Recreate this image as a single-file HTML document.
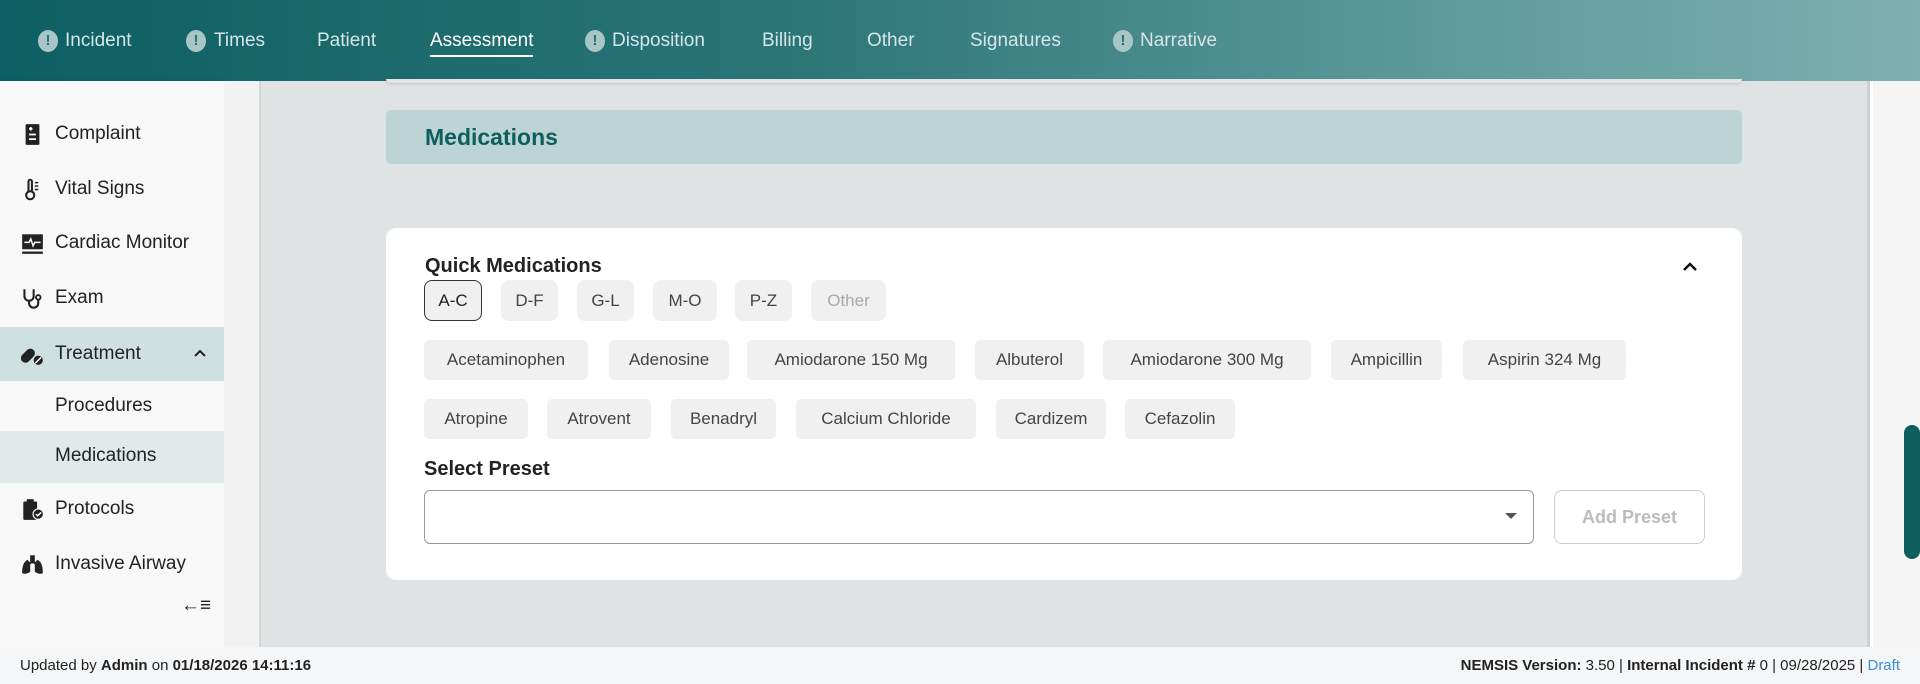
<!DOCTYPE html>
<html><head><meta charset="utf-8"><style>
*{box-sizing:border-box;margin:0;padding:0}
body{width:1920px;height:684px;overflow:hidden;font-family:"Liberation Sans",sans-serif;background:#fff;position:relative}
.hdr{position:absolute;left:0;top:0;width:1920px;height:81px;background:linear-gradient(90deg,#0c5f62 0%,#2a7476 40%,#5e9a9c 75%,#7db0b1 100%)}
.nav{position:absolute;top:30px;font-size:19px;color:#d6e6e6;white-space:nowrap}
.nav.act{color:#fff}
.nav.act:after{content:"";position:absolute;left:0;right:0;top:25px;height:2px;background:#fff}
.ex{position:absolute;top:30px;width:20px;height:22px;border-radius:50%;background:#a9c6c7;color:#2a6d70;font-weight:bold;font-size:15px;text-align:center;line-height:22px}
.side{position:absolute;left:0;top:81px;width:224px;height:566px;background:#f8f8f8;box-shadow:2px 0 4px rgba(0,0,0,.12)}
.si{position:absolute;left:0;width:224px;font-size:19px;color:#222}
.si span{position:absolute;left:55px}
.ic{position:absolute;left:21px;top:0;width:23px;height:23px}
.gap{position:absolute;left:224px;top:81px;width:37px;height:566px;background:#f2f2f2;border-right:2px solid #d4d6d6}
.main{position:absolute;left:261px;top:81px;width:1609px;height:566px;background:#dfe3e3;border-right:3px solid #d0d2d2}
.rs{position:absolute;left:1873px;top:81px;width:47px;height:566px;background:#f5f5f5}
.thumb{position:absolute;left:1904px;top:425px;width:16px;height:134px;background:#0e5e5e;border-radius:8px}
.mh{position:absolute;left:386px;top:110px;width:1356px;height:54px;background:#bdd4d4;border-radius:5px;color:#0e5e5e;font-weight:bold;font-size:23px;line-height:54px;padding-left:39px}
.card{position:absolute;left:386px;top:228px;width:1356px;height:352px;background:#fff;border-radius:10px}
.t{position:absolute;font-weight:bold;font-size:20px;color:#222}
.b{position:absolute;height:41px;line-height:41px;text-align:center;background:#f0f0f0;border-radius:8px;font-size:17px;color:#444}
.c{position:absolute;height:40px;line-height:40px;text-align:center;background:#f0f0f0;border-radius:5px;font-size:17px;color:#444}
.foot{position:absolute;left:0;top:647px;width:1920px;height:37px;background:#f5f6f7;font-size:15px;color:#222;line-height:37px}
</style></head><body>
<div class="hdr">
<div class="ex" style="left:38px">!</div><div class="nav" style="left:65px">Incident</div>
<div class="ex" style="left:186px">!</div><div class="nav" style="left:214px">Times</div>
<div class="nav" style="left:317px">Patient</div>
<div class="nav act" style="left:430px">Assessment</div>
<div class="ex" style="left:585px">!</div><div class="nav" style="left:612px">Disposition</div>
<div class="nav" style="left:762px">Billing</div>
<div class="nav" style="left:867px">Other</div>
<div class="nav" style="left:970px">Signatures</div>
<div class="ex" style="left:1113px">!</div><div class="nav" style="left:1140px">Narrative</div>
</div>
<div class="side">
<div class="si" style="top:42px;height:24px"><svg class="ic" viewBox="0 0 20 20"><rect x="4" y="1" width="12" height="18" rx="1" fill="#222"/><path d="M7 5h3M8.5 3.5v3M7 10h6M7 14h6" stroke="#fff" stroke-width="1.5"/></svg><span>Complaint</span></div>
<div class="si" style="top:97px;height:24px"><svg class="ic" viewBox="0 0 20 20"><circle cx="8" cy="15" r="3.5" fill="none" stroke="#222" stroke-width="1.8"/><path d="M6.5 12V3a1.5 1.5 0 013 0v9" fill="none" stroke="#222" stroke-width="1.8"/><path d="M12 4h3M12 7h3M12 10h3" stroke="#222" stroke-width="1.3"/></svg><span>Vital Signs</span></div>
<div class="si" style="top:151px;height:24px"><svg class="ic" viewBox="0 0 20 20"><rect x="1" y="2" width="18" height="13" fill="#222"/><path d="M3 9h4l1.5-3 2 6 1.5-3h5" stroke="#fff" stroke-width="1.3" fill="none"/><rect x="1" y="17" width="18" height="2" fill="#222"/></svg><span>Cardiac Monitor</span></div>
<div class="si" style="top:206px;height:24px"><svg class="ic" viewBox="0 0 20 20"><path d="M3 2v6a4 4 0 008 0V2M7 12v2a4 4 0 008 0v-3" fill="none" stroke="#222" stroke-width="1.8"/><circle cx="15" cy="9" r="2" fill="none" stroke="#222" stroke-width="1.6"/></svg><span>Exam</span></div>
<div style="position:absolute;left:0;top:246px;width:224px;height:54px;background:#cfe0e0"></div>
<div class="si" style="top:262px;height:24px"><svg class="ic" viewBox="0 0 20 20"><rect x="2" y="4" width="8" height="14" rx="4" transform="rotate(45 6 11)" fill="#222"/><circle cx="15" cy="15" r="4" fill="#222"/><path d="M12.5 17.5l5-5" stroke="#fff" stroke-width="1.2"/></svg><span>Treatment</span><svg style="position:absolute;left:194px;top:6px" width="12" height="10" viewBox="0 0 12 10"><path d="M1 7l5-5 5 5" fill="none" stroke="#222" stroke-width="2"/></svg></div>
<div class="si" style="top:314px;height:24px"><span>Procedures</span></div>
<div style="position:absolute;left:0;top:350px;width:224px;height:52px;background:#e0eaea"></div>
<div class="si" style="top:364px;height:24px"><span>Medications</span></div>
<div class="si" style="top:417px;height:24px"><svg class="ic" viewBox="0 0 20 20"><rect x="2" y="3" width="12" height="16" rx="1" fill="#222"/><rect x="5" y="1" width="6" height="4" fill="#222"/><circle cx="15" cy="14" r="4.5" fill="#222" stroke="#f8f8f8"/><path d="M13 14l1.5 1.5 3-3" stroke="#fff" stroke-width="1.3" fill="none"/></svg><span>Protocols</span></div>
<div class="si" style="top:472px;height:24px"><svg class="ic" viewBox="0 0 20 20"><path d="M9 2v7M11 2v7M9 8l-3 2M11 8l3 2" stroke="#222" stroke-width="2"/><path d="M6 6C2 7 1 13 1 17c0 2 6 1 7-1V9zM14 6c4 1 5 7 5 11 0 2-6 1-7-1V9z" fill="#222"/></svg><span>Invasive Airway</span></div>
<div style="position:absolute;left:181px;top:514px;font-size:19px;font-weight:bold;color:#222">←≡</div>
</div>
<div class="gap"></div>
<div class="main"></div>
<div style="position:absolute;left:386px;top:79px;width:1356px;height:4px;background:#e4e6e6;border-radius:0 0 8px 8px;box-shadow:0 1px 2px rgba(0,0,0,.15)"></div>
<div class="rs"></div><div class="thumb"></div>
<div class="mh">Medications</div>
<div class="card"></div>
<div class="t" style="left:425px;top:255px">Quick Medications</div>
<svg style="position:absolute;left:1682px;top:261px" width="16" height="12" viewBox="0 0 16 12"><path d="M2 9l6-6 6 6" fill="none" stroke="#111" stroke-width="2.5"/></svg>
<div class="b" style="left:424px;top:280px;width:58px;border:1px solid #333;line-height:39px;color:#222">A-C</div>
<div class="b" style="left:501px;top:280px;width:57px">D-F</div>
<div class="b" style="left:577px;top:280px;width:57px">G-L</div>
<div class="b" style="left:653px;top:280px;width:64px">M-O</div>
<div class="b" style="left:735px;top:280px;width:57px">P-Z</div>
<div class="b" style="left:811px;top:280px;width:75px;color:#aaa">Other</div>
<div class="c" style="left:424px;top:340px;width:164px">Acetaminophen</div>
<div class="c" style="left:609px;top:340px;width:120px">Adenosine</div>
<div class="c" style="left:747px;top:340px;width:208px">Amiodarone 150 Mg</div>
<div class="c" style="left:975px;top:340px;width:109px">Albuterol</div>
<div class="c" style="left:1103px;top:340px;width:208px">Amiodarone 300 Mg</div>
<div class="c" style="left:1331px;top:340px;width:111px">Ampicillin</div>
<div class="c" style="left:1463px;top:340px;width:163px">Aspirin 324 Mg</div>
<div class="c" style="left:424px;top:399px;width:104px">Atropine</div>
<div class="c" style="left:547px;top:399px;width:104px">Atrovent</div>
<div class="c" style="left:671px;top:399px;width:105px">Benadryl</div>
<div class="c" style="left:796px;top:399px;width:180px">Calcium Chloride</div>
<div class="c" style="left:996px;top:399px;width:110px">Cardizem</div>
<div class="c" style="left:1125px;top:399px;width:110px">Cefazolin</div>
<div class="t" style="left:424px;top:458px">Select Preset</div>
<div style="position:absolute;left:424px;top:490px;width:1110px;height:54px;border:1px solid #999;border-radius:6px;background:#fff"></div>
<div style="position:absolute;left:1505px;top:513px;border-left:6px solid transparent;border-right:6px solid transparent;border-top:6px solid #555"></div>
<div style="position:absolute;left:1554px;top:490px;width:151px;height:54px;border:1px solid #ccc;border-radius:8px;text-align:center;line-height:52px;font-size:18px;font-weight:bold;color:#bbb">Add Preset</div>
<div class="foot"><span style="position:absolute;left:20px">Updated by <b>Admin</b> on <b>01/18/2026 14:11:16</b></span><span style="position:absolute;right:20px"><b>NEMSIS Version:</b> 3.50 | <b>Internal Incident #</b> 0 | 09/28/2025 | <span style="color:#3a8fd8">Draft</span></span></div>
</body></html>
